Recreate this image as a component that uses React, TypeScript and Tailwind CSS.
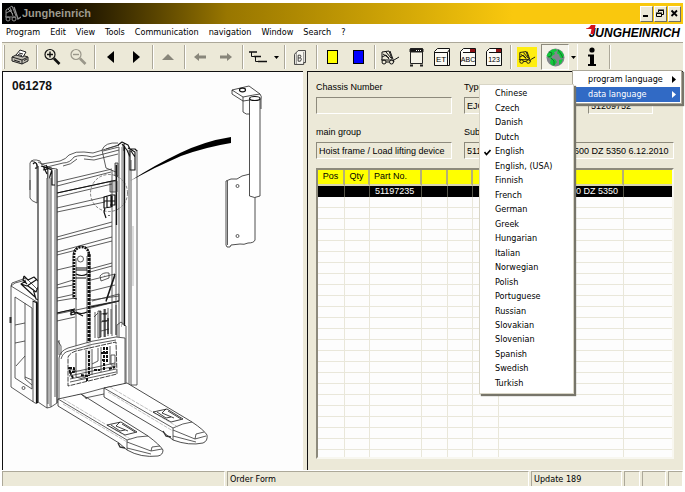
import type { ReactNode } from "react";

const MENUS = ["Program", "Edit", "View", "Tools", "Communication", "navigation", "Window", "Search", "?"];

const LANGUAGES = [
  "Chinese", "Czech", "Danish", "Dutch", "English", "English, (USA)", "Finnish",
  "French", "German", "Greek", "Hungarian", "Italian", "Norwegian", "Polish",
  "Portuguese", "Russian", "Slovakian", "Slovenian", "Spanish", "Swedish", "Turkish",
];

const COLUMNS = [
  { label: "Pos", width: "w-[27px]" },
  { label: "Qty", width: "w-[25px]" },
  { label: "Part No.", width: "w-[52px]" },
  { label: "", width: "w-[26px]" },
  { label: "", width: "w-[25px]" },
  { label: "", width: "w-[26px]" },
  { label: "", width: "w-[125px]" },
  { label: "", width: "w-auto" },
];

const PARTS = [["", "", "51197235", "", "", "", "HHM 600 DZ 5350", ""]];
const EMPTY_ROWS = 24;

const TAHOMA = "font-['DejaVu_Sans_Condensed','DejaVu_Sans',sans-serif]";

function Tool({ label, wide, pressed, children }: { label: string; wide?: boolean; pressed?: boolean; children: ReactNode }) {
  return (
    <button
      aria-label={label}
      className={`flex h-full shrink-0 items-center justify-center ${wide ? "w-[28px]" : "w-[26px]"} ${
        pressed ? "border border-t-[#8d8a7c] border-l-[#8d8a7c] border-r-white border-b-white bg-[#f4f2e8]" : ""
      }`}
    >
      {children}
    </button>
  );
}

function Sep() {
  return <div className="mr-px ml-[3px] h-[24px] w-[2px] shrink-0 border-r border-l border-r-white border-l-[#aca899]" />;
}

function Caret() {
  return (
    <svg width="5" height="3" viewBox="0 0 5 3"><path d="M0 0h5L2.5 3z" /></svg>
  );
}

function Lens({ plus, color }: { plus?: boolean; color: string }) {
  return (
    <svg width="18" height="18" viewBox="0 0 18 18" fill="none" stroke={color}>
      <circle cx="7" cy="6.5" r="5" strokeWidth="1.2" />
      <path d={plus ? "M4 6.5h6M7 3.5v6" : "M4 6.5h6"} strokeWidth="1.4" />
      <path d="M11 10.500l5.500 5.500" strokeWidth="2.600" />
    </svg>
  );
}

function Truck({ size }: { size: number }) {
  return (
    <svg width={size} height={size} viewBox="0 0 20 18" fill="none" stroke="#111">
      <path d="M2 4l7-1 3 8M2 4v8M3 6l6 4M2 9l4-2 3 4M6 4l5 6M1 12h11" />
      <path d="M10 3l4 11M14 12l5-3" />
      <circle cx="4" cy="14" r="2" />
      <circle cx="11.500" cy="14" r="2" />
      <path d="M6 14h3" />
    </svg>
  );
}

function Page({ text, dark }: { text: string; dark?: boolean }) {
  return (
    <svg width="18" height="20" viewBox="0 0 18 20">
      <path d="M1.500 4.500l3-3h12v17h-15z" fill="#fbfaf5" stroke="#111" />
      {dark ? (
        <>
          <path d="M5 2h11v4H5z" fill="#8d1116" />
          <path d="M5 2h6v3H5z" fill="#fff" />
          <path d="M4 5.500h12" stroke="#111" />
        </>
      ) : (
        <path d="M1.500 5.500h13v13M14.500 5.500l2-3" fill="none" stroke="#111" />
      )}
      <text x={dark ? 9 : 8} y="15" textAnchor="middle" fontSize={dark ? 7 : 8} fontFamily="Liberation Sans, sans-serif">{text}</text>
    </svg>
  );
}

function WindowButton({ label, children }: { label: string; children: ReactNode }) {
  return (
    <button
      aria-label={label}
      className="flex h-[16px] w-[13px] items-center justify-center border border-t-white border-l-white border-r-[#716f64] border-b-[#716f64] bg-[#ece9d8]"
    >
      <svg width="9" height="9" viewBox="0 0 9 9" fill="none" stroke="#000">{children}</svg>
    </button>
  );
}

function TitleBar() {
  return (
    <header className="flex h-[21px] shrink-0 items-center bg-linear-to-r from-black via-[#987600] via-33% to-[#f9c80e] to-75% pr-[2px] pl-[2px]">
      <svg className="mr-px" width="17" height="18" viewBox="0 0 17 18" fill="none" stroke="#8f8f8f">
        <path d="M2 5l6-4 4 10M2 5v7M4 4l5 5M2 8l6-3M6 3l3 8M1 12h11" />
        <path d="M10 2l4 12 3-2" strokeWidth="1.400" />
        <circle cx="4" cy="14" r="2" />
        <circle cx="10" cy="14" r="2" />
      </svg>
      <h1 className="flex-1 text-[11px] font-bold text-[#9c998c]">Jungheinrich</h1>
      <div className="flex gap-px">
        <WindowButton label="Minimize"><path d="M1 7h5" strokeWidth="2" /></WindowButton>
        <WindowButton label="Restore"><path d="M2.500 3V1.500h5v4H6M.5 4.500h5v3h-5zM2 1h6M0 4h6" /></WindowButton>
        <WindowButton label="Close"><path d="M1.500 1.500l5.500 5.500M7 1.500L1.500 7" strokeWidth="1.800" /></WindowButton>
      </div>
    </header>
  );
}

function MenuBar() {
  return (
    <nav className={`flex h-[18px] shrink-0 items-center bg-white pr-[3px] pl-[4px] text-[9px] ${TAHOMA}`}>
      <div className="flex flex-1 gap-[10px]">
        {MENUS.map(m => <button key={m}>{m}</button>)}
      </div>
      <div className="relative font-['Liberation_Sans',sans-serif] text-[12px] leading-[14px] font-bold italic">
        JUNGHEINRICH
        <svg className="absolute -top-px -left-[3px]" width="10" height="9" viewBox="0 0 10 9">
          <path d="M0 3.500C3 3 4 1.500 5 0h4.500L8 9H4.500l1-5H0z" fill="#d3141c" />
        </svg>
      </div>
    </nav>
  );
}

function LanguageMenu() {
  return (
    <div className={`absolute top-full left-[31px] z-20 w-[110px] border border-[#aca899] bg-white p-px text-[9px] shadow-[2px_2px_1px_#77756a] ${TAHOMA}`}>
      <button className="flex h-[15px] w-full items-center pr-[4px] pl-[14px]">
        <span className="flex-1 text-left whitespace-nowrap">program language</span>
        <svg width="4" height="7" viewBox="0 0 4 7"><path d="M0 0l4 3.500L0 7z" /></svg>
      </button>
      <div className="relative">
        <button className="flex h-[15px] w-full items-center bg-[#316ac5] pr-[4px] pl-[14px] text-white">
          <span className="flex-1 text-left whitespace-nowrap">data language</span>
          <svg width="4" height="7" viewBox="0 0 4 7" fill="#fff"><path d="M0 0l4 3.500L0 7z" /></svg>
        </button>
        <div className="absolute -top-[3px] right-full flex h-[310px] w-[95px] flex-col border border-[#d8d5c6] bg-white py-[2px] text-black shadow-[2px_2px_1px_#77756a]">
          {LANGUAGES.map(lang => (
            <button key={lang} className="flex flex-1 items-center text-left whitespace-nowrap">
              <span className="flex w-[15px] justify-center">
                {lang === "English" && (
                  <svg width="7" height="7" viewBox="0 0 7 7" fill="none" stroke="#000" strokeWidth="1.600"><path d="M.5 3l2 2.500L6.500 1" /></svg>
                )}
              </span>
              {lang}
            </button>
          ))}
        </div>
      </div>
    </div>
  );
}

function Toolbar() {
  return (
    <div className="flex h-[29px] shrink-0 items-center border-t border-[#aca899] bg-[#ece9d8] py-px">
      <div className="mr-[2px] ml-px h-[24px] w-[2px] border-r border-l border-r-[#aca899] border-l-white" />
      <Tool label="Print">
        <svg width="18" height="16" viewBox="0 0 18 16" stroke="#222" fill="#fff">
          <path d="M1 8l6-3 10 3v4l-6 3-10-3z" fill="#bdbab0" />
          <path d="M1 8l10 3v4M11 11l6-3" fill="none" />
          <path d="M5 6l4-5 6 2-3 5z" />
          <path d="M8 4l4 1M7 5.500l4 1M3 11l6 2M13 11.500l3-1.500" />
        </svg>
      </Tool>
      <Sep />
      <Tool label="Zoom in"><Lens plus color="#111" /></Tool>
      <Tool label="Zoom out"><Lens color="#9a978a" /></Tool>
      <Sep />
      <Tool label="Previous"><svg width="7" height="12" viewBox="0 0 7 12"><path d="M7 0v12L0 6z" /></svg></Tool>
      <Tool label="Next"><svg width="7" height="12" viewBox="0 0 7 12"><path d="M0 0v12l7-6z" /></svg></Tool>
      <Sep />
      <Tool label="Up"><svg width="12" height="6" viewBox="0 0 12 6"><path d="M0 6h12L6 0z" fill="#88867a" /></svg></Tool>
      <Sep />
      <Tool label="Back"><svg width="12" height="8" viewBox="0 0 12 8"><path d="M0 4l5-4v2.500h7v3H5V8z" fill="#88867a" /></svg></Tool>
      <Tool label="Forward"><svg width="12" height="8" viewBox="0 0 12 8"><path d="M12 4L7 0v2.500H0v3h7V8z" fill="#88867a" /></svg></Tool>
      <Sep />
      <Tool label="Structure">
        <svg width="18" height="12" viewBox="0 0 18 12" fill="none" stroke="#111">
          <path d="M0 1h8M5 5.500h7M9 10.500h9" strokeWidth="1.600" />
          <path d="M2.500 1v4.500H5M6.500 5.500v5H9" />
        </svg>
      </Tool>
      <button aria-label="Structure options" className="flex w-[10px] justify-center"><Caret /></button>
      <Sep />
      <Tool label="Bulletin">
        <svg width="12" height="15" viewBox="0 0 13 16" stroke="#333" fill="none">
          <path d="M.5 4.500l4-4h8v13h-2v2H.5z" fill="#f8f7f0" />
          <path d="M2.500 15V3M10.500 2v12" strokeWidth=".6" />
          <path d="M4.500 5.500H7q1 1 0 2.500 2 1.500 0 4H4.500zM4.500 8.500H7" />
        </svg>
      </Tool>
      <Sep />
      <Tool label="Yellow"><span className="h-[14px] w-[11px] border border-black bg-[#ff0]" /></Tool>
      <Tool label="Blue"><span className="h-[14px] w-[11px] border border-black bg-[#00f]" /></Tool>
      <Sep />
      <Tool label="Truck"><Truck size={20} /></Tool>
      <Tool label="Assembly">
        <svg width="15" height="20" viewBox="0 0 15 20" fill="none" stroke="#222">
          <path d="M1.500 1.500h12v15h-12z" fill="#f3f1e6" />
          <path d="M1 2h13v3H1z" fill="#111" />
          <path d="M7 3.500h1M9 3.500h1M11 3.500h1" stroke="#fff" />
          <path d="M1 18.500h3M11 18.500h3" strokeWidth="2" />
        </svg>
      </Tool>
      <Tool label="Spare parts"><Page text="ET" /></Tool>
      <Tool label="Search by name"><Page text="ABC" dark /></Tool>
      <Tool label="Search by number"><Page text="123" dark /></Tool>
      <Sep />
      <Tool label="Truck data" wide>
        <span className="flex h-[20px] w-[20px] items-center justify-center bg-[#ffee10]"><Truck size={18} /></span>
      </Tool>
      <div className="relative flex h-full items-center">
        <Tool label="Language" wide pressed>
          <svg width="19" height="19" viewBox="0 0 19 19">
            <circle cx="9.500" cy="9.500" r="9" fill="#83858d" />
            <path d="M3 4Q6 .5 10 1l1 2-3 1 1 2-3 2-1 3-3-2-1.500-1Q1 6 3 4zM12 1.500q4 1 6 6l-2 3-2-1-1-3-2-1zM5 10l4 1 2 3-3 4q-3-1-4-3zM13 12l4-1q-1 4-4 6z" fill="#12c93c" />
            <path d="M3 4l3 1-1 3-3 1M12 2l3 4 2 4M5 10l3 3 0 4" fill="none" stroke="#175f2b" strokeWidth=".8" />
          </svg>
        </Tool>
        <button aria-label="Language options" className="flex h-full w-[9px] items-center justify-center border-r border-white"><Caret /></button>
        <LanguageMenu />
      </div>
      <Tool label="Info" wide>
        <svg width="10" height="20" viewBox="0 0 10 20"><circle cx="5" cy="3" r="2.600" /><path d="M1 7.500h6V17h2v2H1v-2h2V9.500H1z" /></svg>
      </Tool>
      <Sep />
    </div>
  );
}

// Stacker with mast, forks and the bracket pulled out to the right
function StackerDrawing() {
  return (
    <svg className="block h-full w-full" viewBox="3 72 299 398" preserveAspectRatio="xMinYMin meet" fill="none" stroke="#333" strokeWidth=".8" strokeLinejoin="round">
      <text x="12" y="90" fontSize="12" fontWeight="bold" fontFamily="Liberation Sans, sans-serif" fill="#111" stroke="none">061278</text>

      {/* battery cabinet */}
      <path d="M11 286v101l24 16 2 .5V302L11 286l4-3 11-3M11 286l1-3 14-5 12 12M33 302v100M15 297v81l17 11V308zM15 325l10-2M15 343l10-2M16 366l9-10M25 303v76l7 6M25 377l7 3" />
      <path d="M32.500 301l5 2v100M36.500 302v101" stroke="#111" strokeWidth="1.200" />
      <path d="M24 276l4 4 6-3 4 4M26 281l-5 3 6 2 9-6M24 276l-1 4 4 4M28 286l8 6 2-5M33 289l3 10 3 1M21 284l14 13" stroke="#111" strokeWidth="1.100" />
      <path d="M10.500 317v6" strokeWidth="2" />
      <circle cx="23.500" cy="388" r="1.500" />

      {/* cross members */}
      <path d="M57 182l55-13M57 186l54-14M57 193l55-12M57 197l55-13M57 208l48-11M57 212l48-10M57 237l55-15M57 240l55-14M57 252l55-15M57 255l55-14M57 270l17-4M90 269l22-6M90 272l22-6M57 285l16-5M57 288l16-3M91 280l24-6M57 298l18-4M91 291l24-6M57 301l18-3M57 313l18-4M91 300l28-4M57 321l18-4M91 306l28-5M57 314l62-13" />
      <path d="M57 193l60-13M57 313l18-4M91 307l28-6" stroke="#111" strokeWidth="1.100" />
      <circle cx="109" cy="193" r="18.500" strokeDasharray="3 1.500" strokeWidth=".6" />

      {/* top beam */}
      <path d="M42 164l18-3q6-2 9-6 7-4 15-3l9 1 26-8M43 168l20-5q7 0 11-6 7-3 18 0l27-7M84 159l10 1 24-6M63 166q8-1 14-7" fill="#fff" fillOpacity=".6" />
      <path d="M102 150q3-8 16-7M102 150l4 18 10 4M103 151l16-4M106 149l13-4" />
      <path d="M30 163v35q1 3 7 5V167q0-6-6-6M30 163q2-5 10-2l2 4M30 180v10M38 162l10 5 9 3" />
      <path d="M33 164q3-3 4 1t-2 3M41 166l6 2 2 4 3-3 2 3M43 170l8-2 2 10M46 165l4 7M48 170v8l5 0v-7" stroke="#111" strokeWidth="1.200" />
      <path d="M118 145l4-3 6 3 2 4 5 0 2 2M122 144l5 6 3 7M128 148l7 4v18h-5V150M124 143v8M131 151l4 6v8" stroke="#111" strokeWidth="1.100" />

      {/* left upright */}
      <path d="M38 166v236l9 6 4-1 6-4V169l-9-1v236" fill="#fff" />
      <path d="M38 166v236M51 178v229M57 169v234M55 170v227M47 178v230" />
      <path d="M50 178v228" stroke="#999" strokeWidth="1.400" />
      <path d="M42 166l10 4q-3 8-2 8M52 171v14h3M44 168l3 6" stroke="#111" strokeWidth="1.200" />

      {/* right upright */}
      <path d="M112 170v166M116 165v170M119 147v190M123 145v180M129 150v235M131 160v226M137 150v235h-6" />
      <path d="M124.500 146v180M116.500 165v60" stroke="#111" strokeWidth="1.300" />
      <path d="M121.500 147v180M133 226v60" stroke="#aaa" />
      <path d="M115 163h3v13h-3zM112 181h5v11h-7v-10" fill="#222" fillOpacity=".25" />
      <path d="M104 197l7-2v12l-7 1zM110 195l5 0v10h-5M105 208l-1 4 2 6M112 196v11M104 201h11M107 196v12" stroke="#111" strokeWidth="1.200" />
      <path d="M109 215v1" strokeWidth="1.500" />
      <path d="M100 276q3-4 9-3v5l-8 3zM104 276h.5M115 276l-9 26M92 301l27-7v7l-28 7" />
      <path d="M115 274l-9 27" stroke="#111" strokeWidth="1.300" />

      {/* lift cylinder and chain */}
      <path d="M73 298V256q0-9 8-10 8 0 9 10v120M76 258v118q5 3 11 0V256" fill="#fff" />
      <path d="M74 297V256q0-8 7-9 8 0 8 9" stroke="#111" strokeWidth="2.600" strokeDasharray="2 1" />
      <path d="M89 254v122" stroke="#111" strokeWidth="3" strokeDasharray="3 1" />
      <path d="M76 268h11M76 270h11M76 274q6 3 11 0M76 278h10M76 312q5 3 11 0M73 298l4 1M76 370q6 3 11 0" stroke="#111" strokeWidth="1.100" />
      <circle cx="80.500" cy="259" r="3" />
      <path d="M70 314l3-2 4 1 6 3M71 311q3-2 4 3l-4 1z" stroke="#111" strokeWidth="1.200" />

      {/* hydraulics behind the panel */}
      <path d="M95 312v26M98 311v27l3-1V311zM104 309v28M108 308v28M111 309v25M101 322l8-2M101 314l7-1M101 331l8-2M94 317l4-4M116 305v30" />
      <path d="M100 311v26M105 309v28M108 318v16M102 321h5M103 314h4" stroke="#111" strokeWidth="1.200" />

      {/* lower panel */}
      <path d="M59 400v-42q1-7 9-10 24-8 48-11l9 1v46l-21 4-22 6-23 6zM61 359q2-7 8-8 24-8 47-11" fill="#fff" fillOpacity=".85" />
      <path d="M68 357q2-4 8-6l40-9 1 32-49 12z" stroke="#111" strokeDasharray="5 1" />
      <path d="M76 353v24q5 3 10 0v-27M92 349v26M98 348v13l-6 3M101 347v25M110 346v18M69 369l7 2M69 376l47-10M70 379l46-10M70 382l46-10M69 373l46-10M111 355l4 0v10h-4z" />
      <path d="M89 351v25M104 347v24M107 347v15M69 368h5v4h-4zM94 370h6M101 353h6M102 360h5M109 369l6-2M70 372l3 6M81 375l6 1v5" stroke="#111" strokeWidth="2" strokeDasharray="3 1" />
      <path d="M117 325l4-3 5 4v58M117 325v12M59 340v15M58 341l3 5v9" />

      {/* rear fork */}
      <path d="M104 388l23-5 65 39q12 8 15 13 1 6-4 8-14 3-30-3l-10-8-59-35z" fill="#fff" stroke="#222" />
      <path d="M104 388l69 40v12M173 428q10-5 19-6M173 436l23 6M173 430l22 9 11-3M195 439l1-5 8-2" />
      <path d="M108 392l65 39M110 387l68 40" strokeDasharray="4 1" stroke="#999" strokeWidth=".6" />
      <path d="M163 431l3 5 5 1" strokeWidth="1.400" />
      <path d="M153 412l14-3 16 10-12 3zM157 412l9 6 5-1M166 409l-4 4 12 5M168 411l13 8" stroke="#111" />

      {/* front fork */}
      <path d="M58 399l23-5 67 42q12 9 15 14 0 5-5 6-17 2-31-6l-8-7-61-37z" fill="#fff" stroke="#222" />
      <path d="M58 399l69 41v10M127 440q10-4 21-4M127 448l24 6M127 442l24 9 11-2M151 451l1-4 8-1M85 398l19-4M81 394l6 5" />
      <path d="M63 404l64 38M63 399l69 41" strokeDasharray="4 1" stroke="#999" strokeWidth=".6" />
      <path d="M118 443l2 4 5 1" strokeWidth="1.400" />
      <path d="M107 425l14-3 16 10-12 3zM111 425l9 6 5-1M120 422l-4 4 12 5M122 424l13 8" stroke="#111" />

      {/* pointer */}
      <path d="M130 181Q155 165 180 153 205 141 231 137v6Q206 147 181 156 155 167 130 181z" fill="#000" stroke="none" />

      {/* bracket */}
      <path d="M232 90l17-4 11 8q2 2 1 6v9M232 90v4l11 7v11q3 3 7 2M232 90l11 7q10-2 17-3M243 97v4l7-1" stroke="#222" />
      <ellipse cx="242.500" cy="90" rx="3" ry="1.800" stroke="#111" strokeWidth="1.200" />
      <path d="M226 181l5-2 6 0 5-3 8-2h5v66q-1 3-7 3-4 2-8 1l-9 1-1 2q-4 1-4-2z" fill="#fff" stroke="#222" />
      <path d="M227.500 181v64" />
      <path d="M249.500 99v97q5 3 10.500 0V99" fill="#fff" stroke="#222" />
      <ellipse cx="254.800" cy="98.500" rx="5.200" ry="2" fill="#fff" stroke="#111" strokeWidth="1.200" />
      <circle cx="237.500" cy="186" r="1.500" />
      <circle cx="237.500" cy="236" r="1.500" />
    </svg>
  );
}

function Field({ id, label, value, span }: { id: string; label: string; value: string; span?: boolean }) {
  return (
    <div className={`flex flex-col gap-[4px] ${span ? "col-span-3" : ""}`}>
      <label htmlFor={id} className="h-[11px] leading-[11px] whitespace-nowrap">{label}</label>
      <input
        id={id}
        readOnly
        defaultValue={value}
        className="h-[17px] w-full border border-t-[#8d8a7c] border-l-[#8d8a7c] border-r-white border-b-white bg-transparent px-[2px]"
      />
    </div>
  );
}

function PartsTable() {
  return (
    <div className="mt-[9px] flex-1 basis-0 overflow-hidden border-2 border-t-[#8d8a7c] border-l-[#8d8a7c] border-r-[#f8f7f0] border-b-[#f8f7f0] bg-[#fdfdfd]">
      <table className="w-full table-fixed border-separate border-spacing-0">
        <thead>
          <tr>
            {COLUMNS.map((col, i) => (
              <th key={i} className={`h-[15px] border-r-2 border-b-2 border-r-[#b5b077] border-b-[#d8d5b0] bg-[#ff0] p-0 font-normal last:border-r-0 ${i === 2 ? "pl-[4px] text-left" : "text-center"} ${col.width}`}>
                {col.label}
              </th>
            ))}
          </tr>
        </thead>
        <tbody>
          {PARTS.map(row => (
            <tr key={row[2]} className="bg-black text-white">
              {row.map((cell, i) => (
                <td key={i} className={`h-[11px] border-r border-[#55554a] p-0 leading-[11px] whitespace-nowrap last:border-r-0 ${i === 6 ? "pr-[5px] text-right" : "pl-[5px]"}`}>{cell}</td>
              ))}
            </tr>
          ))}
          {Array.from({ length: EMPTY_ROWS }, (_, r) => (
            <tr key={r}>
              {COLUMNS.map((_, i) => (
                <td key={i} className="h-[11px] border-r border-b border-[#e9e7da] p-0 last:border-r-0" />
              ))}
            </tr>
          ))}
        </tbody>
      </table>
    </div>
  );
}

function StatusBar() {
  const cell = "border-t border-l border-t-[#aca899] border-l-[#aca899] border-r border-r-white px-[2px] leading-[14px] whitespace-nowrap";
  return (
    <footer className={`flex h-[16px] shrink-0 gap-[2px] border-t border-white bg-[#ece9d8] text-[9px] ${TAHOMA}`}>
      <div className={`w-[223px] ${cell}`} />
      <div className={`flex-1 ${cell}`}>Order Form</div>
      <div className={`w-[91px] ${cell}`}>Update 189</div>
      <div className={`w-[16px] ${cell}`} />
      <div className={`w-[24px] ${cell}`} />
      <div className={`w-[15px] ${cell}`} />
    </footer>
  );
}

export default function App() {
  return (
    <div className="h-screen bg-white px-[2px] pt-[3px] pb-[6px] font-['Liberation_Sans',Arial,sans-serif] text-black">
      <div className="flex h-full flex-col">
        <TitleBar />
        <MenuBar />
        <Toolbar />
        <main className="grid min-h-0 flex-1 grid-cols-[301fr_376fr] grid-rows-1 gap-[4px] bg-[#ece9d8]">
          <section aria-label="Drawing" className="min-h-0 min-w-0 border-t border-l border-[#111] bg-[#fdfdfd]">
            <StackerDrawing />
          </section>
          <section aria-label="Parts" className="flex min-h-0 min-w-0 flex-col border-t border-l border-[#111] pt-[10px] pr-[9px] pb-[11px] pl-[8px] text-[9px]">
            <div className="grid grid-cols-[136fr_112fr_65fr_9fr] gap-x-[12px] gap-y-[13px]">
              <Field id="chassis" label="Chassis Number" value="" />
              <Field id="type" label="Type" value="EJC 110" />
              <Field id="list" label="" value="51209752" />
              <div />
              <Field id="group" label="main group" value="Hoist frame / Load lifting device" />
              <Field id="sub" label="Sub" value="51197235 Carriage HHM 2600 DZ 5350 6.12.2010" span />
            </div>
            <PartsTable />
          </section>
        </main>
        <StatusBar />
      </div>
    </div>
  );
}
